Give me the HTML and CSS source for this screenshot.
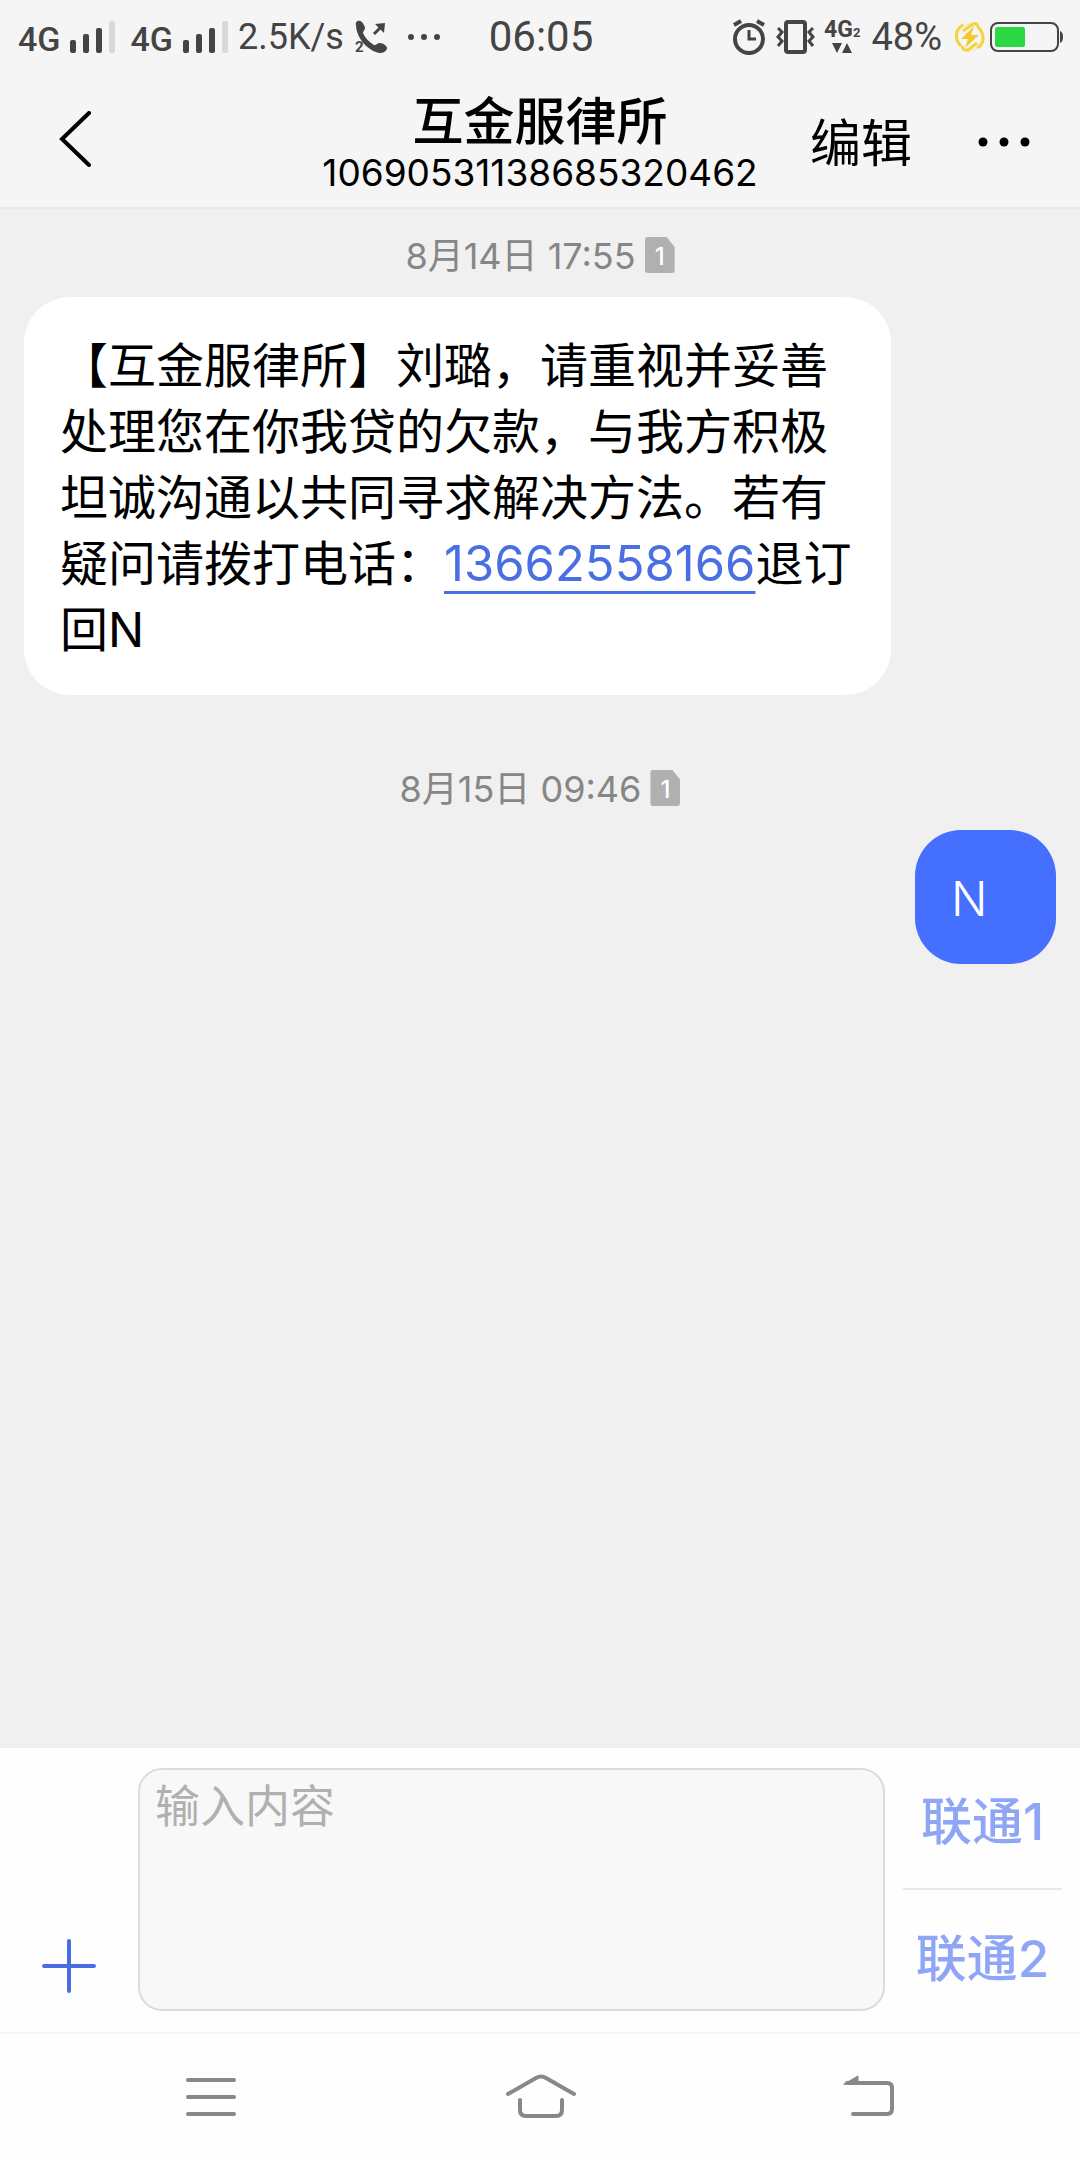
FILE: index.html
```html
<!DOCTYPE html>
<html lang="zh-CN">
<head>
<meta charset="utf-8">
<meta name="viewport" content="width=device-width, initial-scale=1">
<title>互金服律所</title>
<link rel="stylesheet" href="styles.css">
</head>
<body>
<div class="status">
  <div class="status-left">
    <span class="net">4G</span>
    <svg class="bars" width="46" height="34" viewBox="0 0 46 34" aria-hidden="true"><g fill="#444"><rect x="0" y="20" width="6" height="13" rx="2"/><rect x="13" y="14" width="6" height="19" rx="2"/><rect x="26" y="8" width="6" height="25" rx="2"/></g><rect x="39" y="1" width="6" height="32" rx="2" fill="#d8d8d8"/></svg>
    <span class="net">4G</span>
    <svg class="bars" width="46" height="34" viewBox="0 0 46 34" aria-hidden="true"><g fill="#444"><rect x="0" y="20" width="6" height="13" rx="2"/><rect x="13" y="14" width="6" height="19" rx="2"/><rect x="26" y="8" width="6" height="25" rx="2"/></g><rect x="39" y="1" width="6" height="32" rx="2" fill="#d8d8d8"/></svg>
    <span class="speed">2.5K/s</span>
    <svg class="call" width="34" height="38" viewBox="0 0 34 38" aria-hidden="true"><path d="M1 7C0 4 3 2 5 3C7 3 10 8 10 10C10 12 8 13 8 15C10 20 14 24 19 27C21 28 22 25 25 25C28 25 32 28 32 30C32 33 28 35 25 35C21 35 14 31 9 26C4 20 1 13 1 7Z" fill="#444"/><path d="M19 16L27 8" stroke="#444" stroke-width="3"/><path d="M20 6L30 5L29 15Z" fill="#444"/><text x="0" y="34" class="sub">2</text></svg>
    <svg width="34" height="8" viewBox="0 0 34 8" fill="#444" aria-hidden="true"><circle cx="4" cy="4" r="3"/><circle cx="17" cy="4" r="3"/><circle cx="30" cy="4" r="3"/></svg>
  </div>
  <time class="clock">06:05</time>
  <div class="status-right">
    <svg width="32" height="36" viewBox="0 0 32 36" fill="none" stroke="#444" aria-hidden="true"><circle cx="16" cy="20" r="14" stroke-width="4"/><path d="M16 11V20H23" stroke-width="3"/><path d="M1 6L8 2M31 6L24 2" stroke-width="4"/></svg>
    <svg class="vibrate" width="40" height="36" viewBox="0 0 40 36" fill="none" stroke="#444" aria-hidden="true"><rect x="10" y="3" width="19" height="30" rx="2" stroke-width="4"/><path d="M2 9L6 13L2 18L6 22L2 27M37 9L33 13L37 18L33 22L37 27" stroke-width="3"/></svg>
    <svg class="data" width="38" height="44" viewBox="0 0 38 44" fill="#444" aria-hidden="true"><text x="0" y="22" class="data-net">4G</text><text x="29" y="22" class="sub-small">2</text><path d="M8 28H18L13 38ZM18 38L23 28L28 38Z"/></svg>
    <span class="percent">48%</span>
    <svg class="bolt" width="32" height="32" viewBox="0 0 32 32" fill="none" aria-hidden="true"><circle cx="16" cy="16" r="13" stroke="#fbefc0" stroke-width="3"/><path d="M7 25C0 18 1 8 9 4M24 6C31 13 31 23 23 27M9 10L19 3Q23 1 24 6M23 22L14 29Q9 30 8 25" stroke="#f3d243" stroke-width="3"/><path d="M20 5L7 18H14L11 27L25 14H17Z" fill="#f5c82c"/></svg>
    <svg width="74" height="32" viewBox="0 0 74 32" aria-hidden="true"><rect x="1" y="2" width="67" height="28" rx="7" fill="none" stroke="#444" stroke-width="2"/><rect x="5" y="6" width="30" height="20" rx="2" fill="#2bd843"/><path d="M70 10Q73 11 73 16T70 22Z" fill="#444"/></svg>
  </div>
</div>
<header class="titlebar">
  <button class="back" type="button" aria-label="返回"><svg width="34" height="56" viewBox="0 0 34 56" fill="none" stroke="#000" stroke-width="4" stroke-linecap="round"><path d="M31 2L4 28L31 54"/></svg></button>
  <div class="heading">
    <h1 class="name">互金服律所</h1>
    <p class="number">10690531138685320462</p>
  </div>
  <div class="actions">
    <button class="edit" type="button">编辑</button>
    <button class="more" type="button" aria-label="更多"><svg width="52" height="10" viewBox="0 0 52 10"><circle cx="5" cy="5" r="4.5"/><circle cx="26" cy="5" r="4.5"/><circle cx="47" cy="5" r="4.5"/></svg></button>
  </div>
</header>
<main class="thread">
  <div class="stamp"><time>8月14日 17:55</time><span class="sim-badge">1</span></div>
  <p class="bubble received">【互金服律所】刘璐，请重视并妥善处理您在你我贷的欠款，与我方积极坦诚沟通以共同寻求解决方法。若有疑问请拨打电话：<a class="phone" href="tel:13662558166">13662558166</a>退订回N</p>
  <div class="stamp"><time>8月15日 09:46</time><span class="sim-badge">1</span></div>
  <p class="bubble sent">N</p>
</main>
<form class="composer">
  <button class="add" type="button" aria-label="添加"><svg width="56" height="56" viewBox="0 0 56 56" stroke="#4a6de5" stroke-width="4" stroke-linecap="round"><path d="M3 28H53M28 3V53"/></svg></button>
  <textarea class="field" placeholder="输入内容" aria-label="输入内容"></textarea>
  <div class="send">
    <button class="send-button" type="button">联通1</button>
    <button class="send-button" type="button">联通2</button>
  </div>
</form>
<nav class="keys">
  <button class="key" type="button" aria-label="菜单"><svg width="52" height="48" viewBox="0 0 52 48"><path d="M2 7H48M2 24H48M2 41H48"/></svg></button>
  <button class="key" type="button" aria-label="主页"><svg width="72" height="48" viewBox="0 0 72 48"><path d="M4 21L32 5Q37 2 42 5L70 21M16 27V37Q16 43 22 43H52Q58 43 58 37V27"/></svg></button>
  <button class="key" type="button" aria-label="后退"><svg width="52" height="48" viewBox="0 0 52 48"><path d="M5 10H45Q50 10 50 15V36Q50 41 45 41H11"/><path class="solid" d="M2 11L16 3V11Z"/></svg></button>
</nav>
</body>
</html>
```
FILE: styles.css
```css
* {
  box-sizing: border-box;
}

body {
  margin: 0;
  min-height: 100vh;
  display: flex;
  flex-direction: column;
  background: #f0f0f0;
  color: #000;
  font-family: Inter, "Noto Sans CJK SC", sans-serif;
  font-size: 48px;
  line-height: 66px;
}

button {
  padding: 0;
  border: 0;
  background: none;
  color: inherit;
  font: inherit;
}

svg {
  display: block;
  flex: none;
}

.status {
  display: grid;
  grid-template-columns: 1fr auto 1fr;
  align-items: center;
  height: 72px;
  padding: 2px 16px 0 18px;
  background: #f5f5f5;
  color: #444;
  font-family: Roboto, sans-serif;
  font-size: 36px;
  line-height: 48px;
}

.status-left,
.status-right {
  display: flex;
  align-items: center;
}

.status-right {
  justify-content: flex-end;
}

.net {
  font-size: 34px;
  font-weight: 500;
  padding-top: 4px;
}

.bars {
  margin: 0 9px 0 10px;
}

.bars + .net {
  margin-left: 5px;
}

.call {
  margin: 0 18px 0 11px;
}

.sub {
  font-size: 15px;
  font-weight: 700;
  fill: #444;
}

.sub-small {
  font-size: 13px;
  font-weight: 700;
}

.data-net {
  font-size: 23px;
  font-weight: 700;
}

.clock {
  font-size: 42px;
}

.percent {
  font-size: 38px;
}

.vibrate {
  margin: 0 8px 0 11px;
}

.data {
  margin-right: 9px;
}

.bolt {
  margin: 0 4px 0 12px;
}

.titlebar {
  display: grid;
  grid-template-columns: 1fr auto 1fr;
  align-items: center;
  height: 137px;
  padding: 10px 48px 0;
  border-bottom: 2px solid #e9e9e9;
  background: #f5f5f5;
}

.back {
  justify-self: start;
  padding: 10px;
  margin-top: -12px;
}

.heading {
  text-align: center;
}

.name,
.number {
  margin: 0;
}

.name {
  font-size: 51px;
  font-weight: 500;
  line-height: 56px;
}

.number {
  font-size: 37px;
  line-height: 46px;
}

.actions {
  display: flex;
  align-items: center;
  justify-content: flex-end;
  gap: 66px;
  margin-top: -6px;
}

.edit {
  padding-top: 4px;
  font-size: 51px;
}

.more {
  padding: 20px 2px 20px 0;
}

.thread {
  flex: 1;
  display: flex;
  flex-direction: column;
  padding: 21px 24px;
}

.stamp {
  display: flex;
  align-items: center;
  justify-content: center;
  gap: 9px;
  margin-bottom: 17px;
  color: #868686;
  font-size: 36px;
  line-height: 48px;
}

.stamp time {
  padding-top: 2px;
}

.bubble + .stamp {
  margin-top: 68px;
}

.sim-badge {
  width: 30px;
  height: 36px;
  border-radius: 3px;
  background: #b0b0b0;
  clip-path: polygon(0 0, 22px 0, 100% 10px, 100% 100%, 0 100%);
  color: #fff;
  font-size: 24px;
  font-weight: 500;
  line-height: 40px;
  text-align: center;
}

.bubble {
  margin: 0;
  padding: 36px 36px 32px;
  border-radius: 46px;
}

.received {
  align-self: flex-start;
  width: 84%;
  background: #fff;
}

.sent {
  align-self: flex-end;
  min-width: 141px;
  background: #456fff;
  color: #fff;
  font-weight: 300;
}

.phone {
  color: #4a6fe3;
  font-size: 49px;
  text-decoration: underline;
  text-decoration-thickness: 3px;
  text-underline-offset: 10px;
}

.composer {
  display: grid;
  grid-template-columns: 138px 1fr 195px;
  height: 286px;
  background: #fefefe;
  border-bottom: 2px solid #f5f5f5;
}

.add {
  align-self: end;
  justify-self: center;
  padding: 12px;
  margin-bottom: 26px;
}

.field {
  width: 100%;
  height: 243px;
  margin: 20px 0 0;
  padding: 4px 15px;
  border: 2px solid #dcdcdc;
  border-radius: 24px;
  background: #f8f8f8;
  color: #000;
  font: inherit;
  font-size: 45px;
  resize: none;
}

.field::placeholder {
  color: #b0b0b0;
  opacity: 1;
}

.send {
  display: grid;
  grid-template-rows: 1fr 1fr;
  padding: 4px 18px 8px;
}

.send-button {
  padding-top: 4px;
  color: #8fa5f5;
  font-size: 51px;
  font-weight: 500;
}

.send-button + .send-button {
  border-top: 2px solid #e8e8e8;
}

.keys {
  display: grid;
  grid-template-columns: repeat(3, 1fr);
  height: 126px;
  padding: 0 48px;
  background: #fefefe;
}

.key {
  display: grid;
  place-items: center;
  fill: none;
  stroke: #888;
  stroke-width: 4;
  stroke-linecap: round;
}

.solid {
  fill: #888;
  stroke-width: 1;
}
```
